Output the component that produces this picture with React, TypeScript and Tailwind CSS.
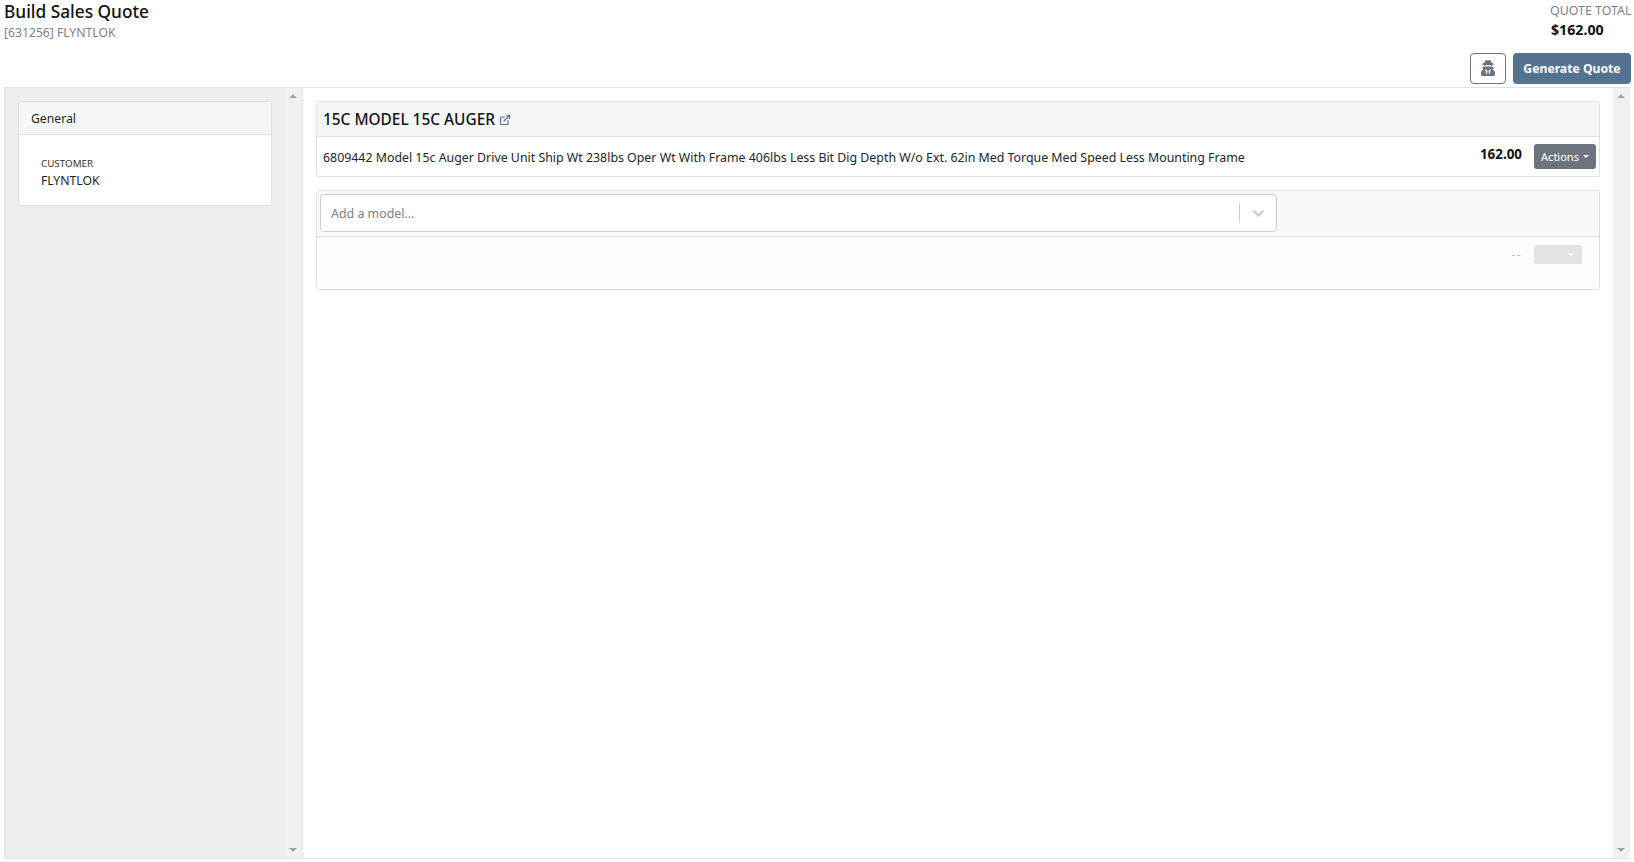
import { ChevronDown, ExternalLink } from 'lucide-react';
import { FaUserSecret } from 'react-icons/fa';

function ScrollTrack() {
  return (
    <div className="flex w-[17px] shrink-0 flex-col items-center justify-between bg-[#f1f1f1] py-[6px] pr-[2px]">
      <div className="h-0 w-0 border-x-[4px] border-b-[4px] border-x-transparent border-b-[#a3a3a3]" />
      <div className="h-0 w-0 border-x-[4px] border-t-[4px] border-x-transparent border-t-[#a3a3a3]" />
    </div>
  );
}

export default function App() {
  return (
    <div className="flex h-[862px] w-[1634px] flex-col overflow-hidden bg-white font-['Noto_Sans','Open_Sans',sans-serif] text-[#212529]">
      <header className="flex h-[87px] shrink-0 justify-between pl-[4px] pr-[3px]">
        <div>
          <h1 className="mt-[-1px] text-[17.3px] leading-[26px] font-medium text-[#111]">Build Sales Quote</h1>
          <div className="mt-[-1px] text-[12.2px] leading-[17px] text-[#7b8288]">[631256] FLYNTLOK</div>
        </div>
        <div className="flex flex-col items-end">
          <div className="w-[81px] text-[12.4px] leading-[21px] whitespace-nowrap text-[#7b8288]">QUOTE TOTAL</div>
          <div className="mt-[-1px] w-[80px] text-[14.2px] leading-[20px] font-bold whitespace-nowrap text-[#111]">$162.00</div>
          <div className="mt-[13px] flex gap-[7px]">
            <button className="flex h-[31px] w-[36px] items-center justify-center rounded-[4px] border border-[#6c757d] bg-white text-[#6c757d]">
              <FaUserSecret className="mb-[1px] text-[16px]" />
            </button>
            <button className="h-[31px] w-[118px] rounded-[4px] bg-[#547391] pt-[1px] text-[12.2px] font-bold text-white">Generate Quote</button>
          </div>
        </div>
      </header>

      <div className="mx-[4px] mb-[3px] flex min-h-0 flex-1 border border-[#e2e3e5] border-r-0">
        <aside className="flex w-[298px] shrink-0 border-r border-[#e2e3e5] bg-[#eeeeee]">
          <div className="flex-1 pt-[13px] pl-[13px] pr-[13px]">
            <div className="h-[105px] overflow-hidden rounded-[3px] border border-[#dfe0e1] bg-white">
              <div className="flex h-[33px] items-center border-b border-[#dfe0e1] bg-[#f5f7f7] pt-[2px] pl-[12px] text-[12.2px] text-[#212529]">General</div>
              <div className="pt-[22px] pl-[22px]">
                <div className="text-[9.8px] leading-[14px] text-[#333]">CUSTOMER</div>
                <div className="mt-[1px] text-[12.2px] leading-[17px] text-[#212529]">FLYNTLOK</div>
              </div>
            </div>
          </div>
          <ScrollTrack />
        </aside>

        <main className="flex min-w-0 flex-1">
          <div className="min-w-0 flex-1 pt-[13px] pl-[13px] pr-[13px]">
            <section className="overflow-hidden rounded-[3px] border border-[#dfe0e1]">
              <div className="flex h-[35px] items-center gap-[4px] border-b border-[#dfe0e1] bg-[#f5f7f7] pt-[1px] pl-[6px]">
                <span className="text-[15.4px] font-medium text-[#111]">15C MODEL 15C AUGER</span>
                <ExternalLink className="h-[12px] w-[12px] text-[#547391]" strokeWidth={2.4} />
              </div>
              <div className="flex h-[39px] items-center bg-white pl-[6px] pr-[3px]">
                <div className="mt-[3px] min-w-0 flex-1 truncate text-[12.36px] text-[#212529]">
                  6809442 Model 15c Auger Drive Unit Ship Wt 238lbs Oper Wt With Frame 406lbs Less Bit Dig Depth W/o Ext. 62in Med Torque Med Speed Less Mounting Frame
                </div>
                <div className="mr-[12px] mb-[4px] text-[13.4px] font-bold text-[#111]">162.00</div>
                <button className="flex h-[25px] w-[62px] items-center justify-center gap-[4px] rounded-[3px] bg-[#6c757d] pt-[1px] text-[11px] text-white">
                  Actions
                  <span className="mb-[2px] h-0 w-0 border-x-[3.5px] border-t-[3.5px] border-x-transparent border-t-white" />
                </button>
              </div>
            </section>

            <section className="mt-[13px] overflow-hidden rounded-[3px] border border-[#dfe0e1]">
              <div className="h-[46px] border-b border-[#dfe0e1] bg-[#f8f9f9] pt-[3px] pl-[3px]">
                <div className="flex h-[38px] w-[957px] items-center rounded-[4px] border border-[#cccccc] bg-white">
                  <div className="flex-1 pt-[2px] pl-[10px] text-[12.4px] text-[#808080]">Add a model...</div>
                  <div className="h-[20px] w-px bg-[#cccccc]" />
                  <ChevronDown className="mr-[9px] ml-[10px] h-[17px] w-[17px] text-[#cccccc]" strokeWidth={3} />
                </div>
              </div>
              <div className="flex h-[52px] items-start justify-end bg-[#fcfdfd] pt-[8px] pr-[17px]">
                <span className="mt-[1px] mr-[12px] text-[11px] tracking-[1.5px] text-[#b0b0b0]">--</span>
                <button className="flex h-[19px] w-[48px] items-center justify-end rounded-[2px] bg-[#e2e3e5] pr-[8px]">
                  <span className="h-0 w-0 border-x-[3.5px] border-t-[3.5px] border-x-transparent border-t-white" />
                </button>
              </div>
            </section>
          </div>
          <ScrollTrack />
        </main>
      </div>
    </div>
  );
}
